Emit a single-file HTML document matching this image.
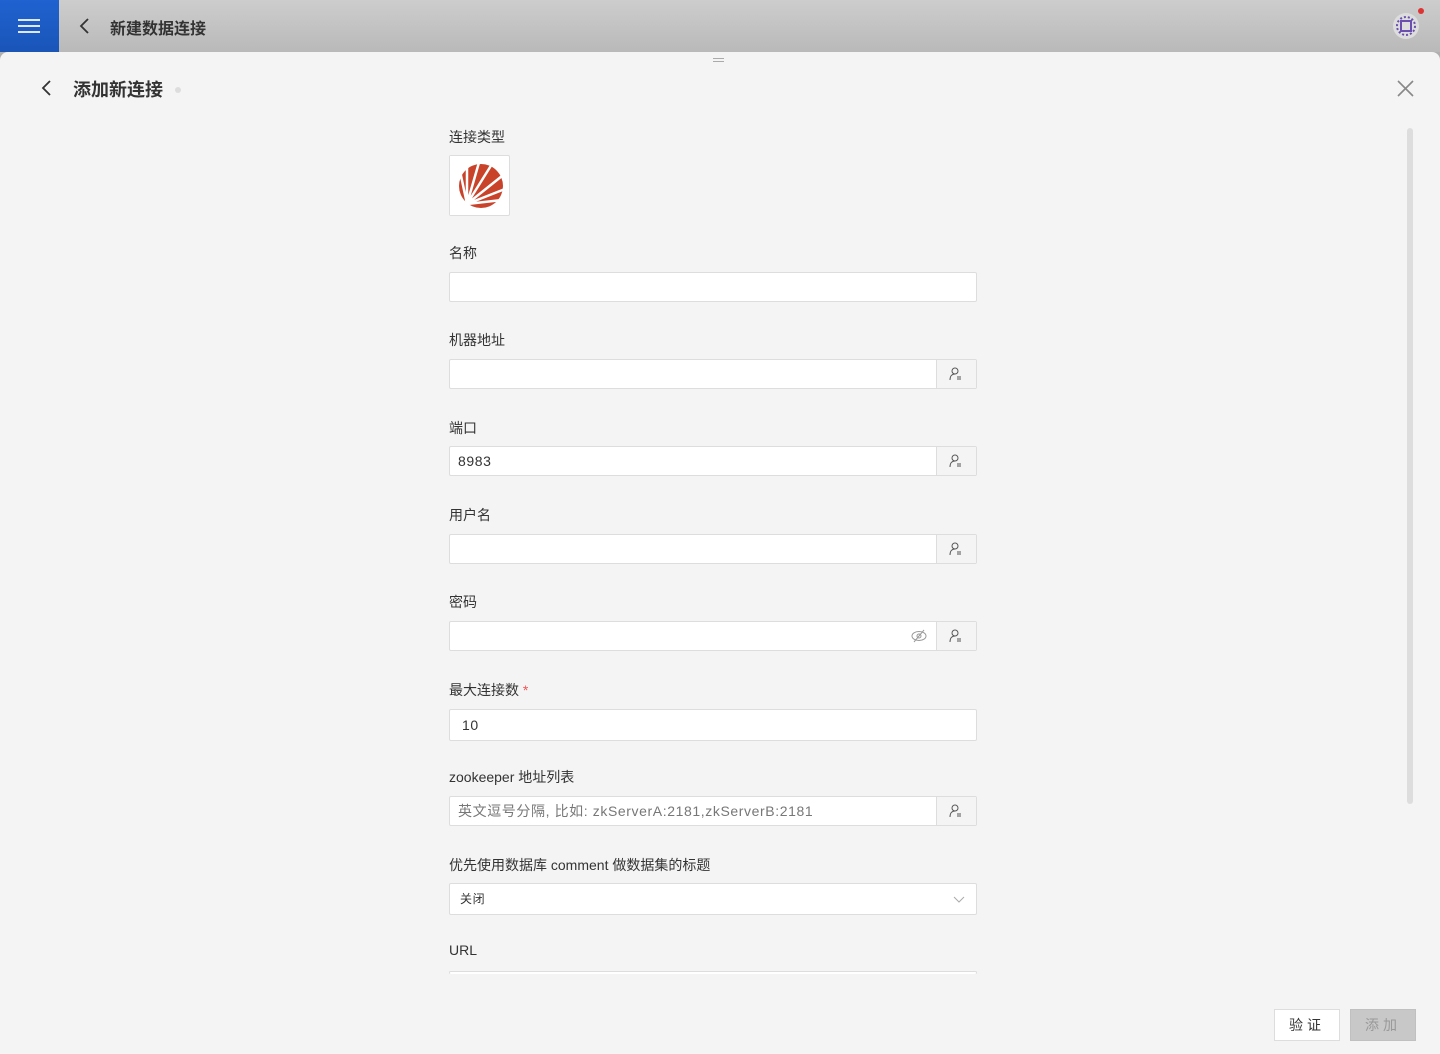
<!DOCTYPE html>
<html><head><meta charset="utf-8"><style>
*{box-sizing:border-box;margin:0;padding:0}
body{width:1440px;height:1054px;overflow:hidden;background:#b0b0b0;font-family:"Liberation Sans","Noto Sans CJK SC",sans-serif;position:relative;color:#333}
.top{position:absolute;left:0;top:0;width:1440px;height:52px;background:linear-gradient(#cdcdcd,#b9b9b9)}
.menu{position:absolute;left:0;top:0;width:59px;height:52px;background:linear-gradient(#1f62d0,#1a55b8)}
.menu i{position:absolute;left:18px;width:22px;height:2px;background:#dfe8f8}
.panel{position:absolute;left:0;top:52px;width:1440px;height:1002px;background:#f4f4f4;border-radius:8px 8px 0 0}
.abs{position:absolute}
.lbl{position:absolute;left:449px;font-size:14px;color:#333}
.inp{position:absolute;left:449px;width:528px;height:30px;background:#fff;border:1px solid #ddd;border-radius:2px;font-size:14px;color:#333;padding-left:8px;line-height:28px;letter-spacing:0.6px}
.add{position:absolute;right:0;top:0;width:40px;height:28px;border-left:1px solid #ddd;background:#f4f4f4}
.add svg{position:absolute;left:12px;top:7px}
</style></head><body>
<div class="top">
<div class="menu"><i style="top:19px"></i><i style="top:25px"></i><i style="top:31px"></i></div>
<svg class="abs" style="left:78px;top:18px" width="12" height="16"><path d="M10 1L3 8l7 7" stroke="#333" stroke-width="1.8" fill="none"/></svg>
<div class="abs" style="left:110px;top:15px;font-size:16px;font-weight:bold;color:#333">新建数据连接</div>
<svg class="abs" style="left:1392px;top:12px" width="30" height="30"><circle cx="14" cy="14" r="13" fill="#ddd"/><circle cx="14" cy="14" r="9" fill="none" stroke="#6a4fb0" stroke-width="2" stroke-dasharray="2 2"/><rect x="9" y="9" width="10" height="10" fill="none" stroke="#6a4fb0" stroke-width="2"/></svg>
<div class="abs" style="left:1418px;top:8px;width:6px;height:6px;border-radius:3px;background:#d33"></div>
</div>
<div class="panel">
<div class="abs" style="left:713px;top:6px;width:11px;height:1px;background:#aaa;box-shadow:0 3px 0 #aaa"></div>
<svg class="abs" style="left:40px;top:28px" width="12" height="16"><path d="M10 1L3 8l7 7" stroke="#333" stroke-width="1.8" fill="none"/></svg>
<div class="abs" style="left:73px;top:24px;font-size:18px;font-weight:bold;color:#333">添加新连接</div>
<div class="abs" style="left:175px;top:35px;width:6px;height:6px;border-radius:3px;background:#ddd"></div>
<svg class="abs" style="left:1397px;top:28px" width="17" height="17"><path d="M1 1L16 16M16 1L1 16" stroke="#888" stroke-width="1.6"/></svg>
<div class="abs" style="left:1407px;top:76px;width:6px;height:676px;border-radius:3px;background:#ddd"></div>
</div>
<div class="lbl" style="top:127px">连接类型</div>
<div class="abs" style="left:449px;top:155px;width:61px;height:61px;background:#fff;border:1px solid #ddd;border-radius:2px">
<svg width="59" height="59" viewBox="0 0 59 59"><circle cx="31" cy="30" r="22" fill="#c9432b"/><g stroke="#fff" stroke-width="2.5"><path d="M17 48L10 15M17 48L17 5M17 48L30 3M17 48L42 8M17 48L52 20M17 48L55 33M17 48L52 44"/></g><rect x="0" y="0" width="9" height="59" fill="#fff"/></svg></div>
<div class="lbl" style="top:243px">名称</div>
<div class="inp" style="top:272px"></div>
<div class="lbl" style="top:330px">机器地址</div>
<div class="inp" style="top:359px"><div class="add"><svg width="14" height="14"><circle cx="6" cy="4" r="3" fill="none" stroke="#555"/><path d="M1 13c0-4 2-6 5-6M8 10h4M8 12h4" stroke="#555" fill="none"/></svg></div></div>
<div class="lbl" style="top:418px">端口</div>
<div class="inp" style="top:446px">8983<div class="add"><svg width="14" height="14"><circle cx="6" cy="4" r="3" fill="none" stroke="#555"/><path d="M1 13c0-4 2-6 5-6M8 10h4M8 12h4" stroke="#555" fill="none"/></svg></div></div>
<div class="lbl" style="top:505px">用户名</div>
<div class="inp" style="top:534px"><div class="add"><svg width="14" height="14"><circle cx="6" cy="4" r="3" fill="none" stroke="#555"/><path d="M1 13c0-4 2-6 5-6M8 10h4M8 12h4" stroke="#555" fill="none"/></svg></div></div>
<div class="lbl" style="top:592px">密码</div>
<div class="inp" style="top:621px"><svg class="abs" style="left:461px;top:7px" width="16" height="14"><ellipse cx="8" cy="7" rx="7" ry="4.5" fill="none" stroke="#999"/><circle cx="8" cy="7" r="2" fill="none" stroke="#999"/><path d="M3 13L13 1" stroke="#999"/></svg><div class="add"><svg width="14" height="14"><circle cx="6" cy="4" r="3" fill="none" stroke="#555"/><path d="M1 13c0-4 2-6 5-6M8 10h4M8 12h4" stroke="#555" fill="none"/></svg></div></div>
<div class="lbl" style="top:680px">最大连接数 <span style="color:#e55">*</span></div>
<div class="inp" style="top:709px;height:32px;line-height:30px;padding-left:12px">10</div>
<div class="lbl" style="top:767px">zookeeper 地址列表</div>
<div class="inp" style="top:796px;color:#777">英文逗号分隔, 比如: zkServerA:2181,zkServerB:2181<div class="add"><svg width="14" height="14"><circle cx="6" cy="4" r="3" fill="none" stroke="#555"/><path d="M1 13c0-4 2-6 5-6M8 10h4M8 12h4" stroke="#555" fill="none"/></svg></div></div>
<div class="lbl" style="top:855px">优先使用数据库 comment 做数据集的标题</div>
<div class="inp" style="top:883px;height:32px;line-height:30px;font-size:12px;padding-left:10px">关闭<svg class="abs" style="left:503px;top:12px" width="12" height="8"><path d="M1 1l5 5 5-5" stroke="#aaa" fill="none"/></svg></div>
<div class="lbl" style="top:942px">URL</div>
<div class="inp" style="top:971px;height:3px;border-bottom:none"></div>
<div class="abs" style="left:1274px;top:1009px;width:66px;height:32px;background:#fff;border:1px solid #ddd;font-size:14px;text-align:center;line-height:30px;letter-spacing:4px">验证</div>
<div class="abs" style="left:1350px;top:1009px;width:66px;height:32px;background:#c8c8c8;border:1px solid #c0c0c0;font-size:14px;text-align:center;line-height:30px;color:#999;letter-spacing:4px">添加</div>
</body></html>
